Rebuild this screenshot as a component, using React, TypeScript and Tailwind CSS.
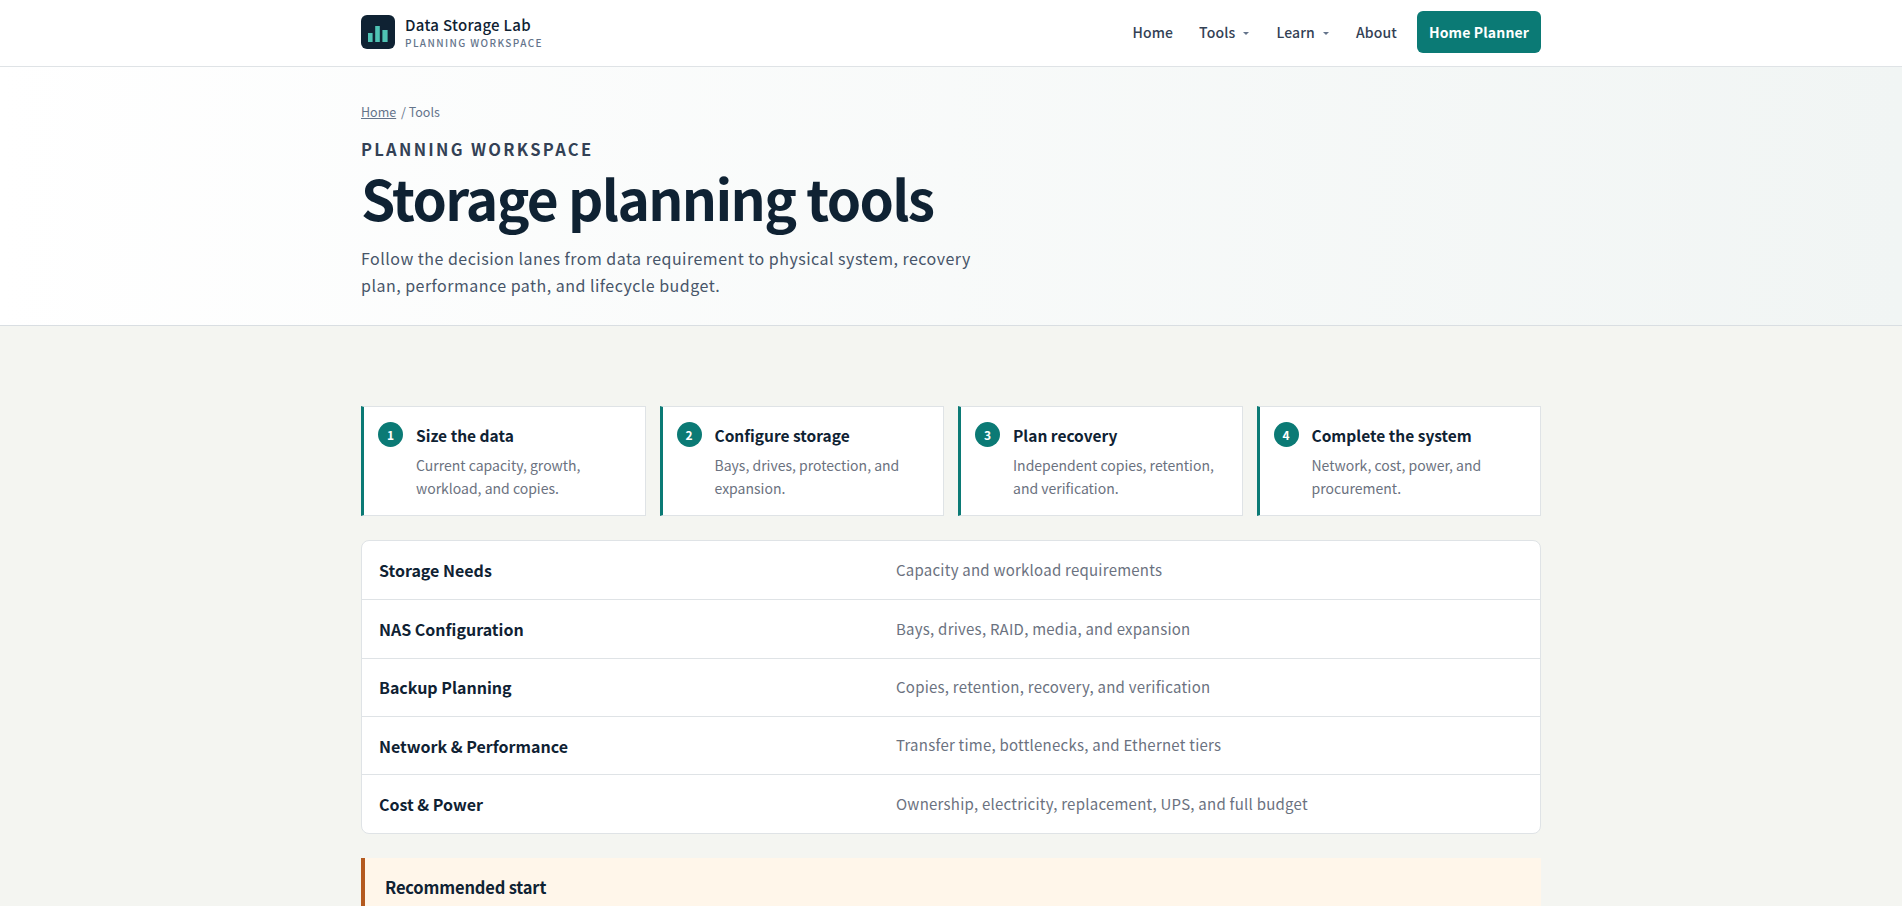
const steps = [
  { n: 1, title: 'Size the data', text: 'Current capacity, growth, workload, and copies.' },
  { n: 2, title: 'Configure storage', text: 'Bays, drives, protection, and expansion.' },
  { n: 3, title: 'Plan recovery', text: 'Independent copies, retention, and verification.' },
  { n: 4, title: 'Complete the system', text: 'Network, cost, power, and procurement.' },
];

const lanes = [
  { title: 'Storage Needs', text: 'Capacity and workload requirements' },
  { title: 'NAS Configuration', text: 'Bays, drives, RAID, media, and expansion' },
  { title: 'Backup Planning', text: 'Copies, retention, recovery, and verification' },
  { title: 'Network & Performance', text: 'Transfer time, bottlenecks, and Ethernet tiers' },
  { title: 'Cost & Power', text: 'Ownership, electricity, replacement, UPS, and full budget' },
];

function Caret() {
  return <span className="ml-2 mt-[2px] h-0 w-0 border-x-[3px] border-t-[3px] border-x-transparent border-t-[#64748b]" />;
}

export default function App() {
  return (
    <div className="h-[906px] overflow-hidden bg-[#f4f5f1] font-['Noto_Sans_CJK_KR','Noto_Sans',sans-serif] text-[#0f2233]">
      {/* Header */}
      <header className="h-[67px] border-b border-[#dfe3e6] bg-white">
        <div className="mx-auto flex h-[64px] w-[1180px] items-center justify-between">
          <div className="flex items-center gap-[10px]">
            <div className="flex h-[34px] w-[34px] items-center justify-center rounded-md bg-[#0f2233]">
              <svg width="34" height="34" viewBox="0 0 34 34" fill="#4fc3b4">
                <rect x="7" y="18" width="4.6" height="9" />
                <rect x="14.2" y="11" width="4.6" height="16" />
                <rect x="21.4" y="15" width="5.2" height="12" />
              </svg>
            </div>
            <div>
              <div className="text-[15px] leading-[20px] font-medium tracking-[0.02em] text-[#0f2233]">Data Storage Lab</div>
              <div className="mt-[1px] text-[10px] leading-[13px] font-medium tracking-[0.14em] text-[#64748b]">PLANNING WORKSPACE</div>
            </div>
          </div>
          <nav className="flex items-center text-[14px] font-medium tracking-[0.01em] text-[#334155]">
            <span className="mr-[26px]">Home</span>
            <span className="mr-[27px] flex items-center">Tools<Caret /></span>
            <span className="mr-[27px] flex items-center">Learn<Caret /></span>
            <span className="mr-[20px]">About</span>
            <span className="flex h-[42px] w-[124px] items-center justify-center rounded-md bg-[#0b7a75] font-semibold text-white">Home Planner</span>
          </nav>
        </div>
      </header>

      {/* Hero */}
      <section className="h-[259px] border-b border-[#d9dee2] bg-gradient-to-r from-white to-[#f1f5f4]">
        <div className="mx-auto w-[1180px] pt-[36px]">
          <div className="text-[12.5px] leading-[18px] text-[#64748b]">
            <span className="underline">Home</span> <span className="ml-[2px]">/ Tools</span>
          </div>
          <div className="mt-[16px] text-[16.5px] leading-[24px] font-semibold tracking-[0.14em] text-[#334155]">PLANNING WORKSPACE</div>
          <h1 className="mt-[1px] text-[55px] leading-[70px] font-semibold tracking-[-0.03em] text-[#0f2233]">Storage planning tools</h1>
          <p className="mt-[13px] w-[620px] text-[16px] leading-[27px] tracking-[0.03em] text-[#475569]">
            Follow the decision lanes from data requirement to physical system, recovery plan, performance path, and lifecycle budget.
          </p>
        </div>
      </section>

      {/* Body */}
      <main className="mx-auto w-[1180px] pt-[80px]">
        <div className="grid grid-cols-4 gap-[14px]">
          {steps.map((step) => (
            <div key={step.n} className="flex h-[110px] gap-[13px] border border-l-[3px] border-[#dfe3e6] border-l-[#0b7a75] bg-white pt-[15px] pl-[14px]">
              <div className="flex h-[25px] w-[25px] shrink-0 items-center justify-center rounded-full bg-[#0b7a75] text-[12px] font-semibold text-white">{step.n}</div>
              <div>
                <div className="text-[15.5px] leading-[27px] font-semibold text-[#0f2233]">{step.title}</div>
                <div className="mt-[5px] text-[14px] leading-[23px] text-[#6b7280]">{step.text}</div>
              </div>
            </div>
          ))}
        </div>

        <div className="mt-[24px] rounded-lg border border-[#dfe3e6] bg-white">
          {lanes.map((lane, i) => (
            <div key={lane.title} className={`grid grid-cols-[501px_1fr] items-center gap-4 px-[17px] ${i === 4 ? 'h-[59.3px]' : 'h-[58.3px]'} ${i > 0 ? 'border-t border-[#dfe3e6]' : ''}`}>
              <div className="text-[16px] font-semibold text-[#0f2233]">{lane.title}</div>
              <div className="text-[15px] tracking-[0.016em] text-[#6b7280]">{lane.text}</div>
            </div>
          ))}
        </div>

        <div className="mt-[24px] h-[120px] border-l-4 border-[#b45a1f] bg-[#fff6ea] pt-[15px] pl-[20px]">
          <div className="text-[16.5px] leading-[28px] font-semibold tracking-[-0.01em] text-[#0f2233]">Recommended start</div>
        </div>
      </main>
    </div>
  );
}
